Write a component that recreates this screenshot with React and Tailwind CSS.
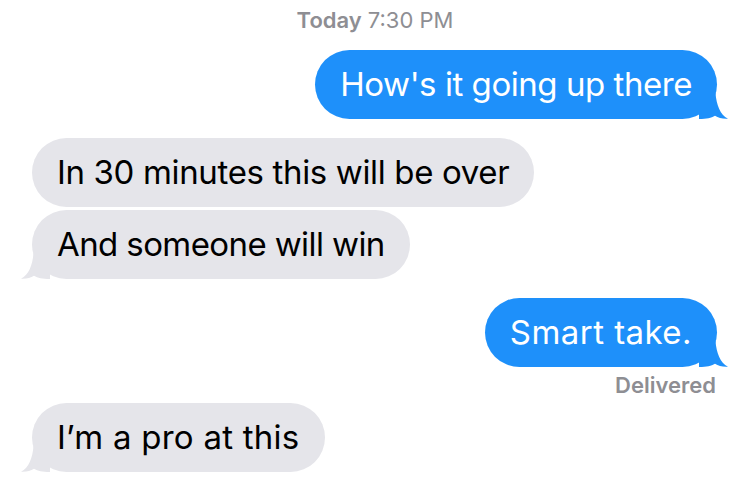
import React from "react";

const FONT = { fontFamily: 'Inter, "Noto Sans", Roboto, sans-serif' };

function Tail({ side }) {
  const isRight = side === "right";
  return (
    <svg
      width="30"
      height="26"
      viewBox="0 0 30 26"
      className={
        isRight
          ? "absolute -right-[12px] bottom-0"
          : "absolute -left-[12px] bottom-0 -scale-x-100"
      }
    >
      <path
        d="M0 0 L16.5 0 C17.5 12 21 21.5 29 25.8 C23.5 26.2 19.5 24.8 16 22.8 C12 25 8 26 0 26 Z"
        fill={isRight ? "#1e90fa" : "#e5e5ea"}
      />
    </svg>
  );
}

function Bubble({ side, text, tail, className = "", tracking = "tracking-[-0.45px]" }) {
  const isRight = side === "right";
  return (
    <div className={`flex ${isRight ? "justify-end pr-[33px]" : "justify-start pl-[32px]"} ${className}`}>
      <div
        className={`relative h-[69px] rounded-full flex items-center px-[25px] text-[33px] leading-none whitespace-nowrap ${tracking} ${
          isRight ? "bg-[#1e90fa] text-white" : "bg-[#e5e5ea] text-black"
        }`}
      >
        {tail && <Tail side={side} />}
        <span className="relative">{text}</span>
      </div>
    </div>
  );
}

export default function App() {
  return (
    <div className="w-[750px] h-[479px] bg-white overflow-hidden flex flex-col" style={FONT}>
      <div className="h-[38px] flex items-center justify-center text-[22px] text-[#8e8e93] pt-[2px]">
        <span className="font-semibold">Today</span>
        <span className="ml-[6px]">7:30 PM</span>
      </div>
      <Bubble side="right" text="How's it going up there" tail className="mt-[12px]" />
      <Bubble side="left" text="In 30 minutes this will be over" className="mt-[19px]" tracking="tracking-[-0.35px]" />
      <Bubble side="left" text="And someone will win" tail className="mt-[3px]" tracking="tracking-[-0.6px]" />
      <Bubble side="right" text="Smart take." tail className="mt-[19px]" tracking="tracking-[0.45px]" />
      <div className="flex justify-end pr-[34px] h-[36px] items-center text-[22px] font-semibold text-[#8e8e93]">
        Delivered
      </div>
      <Bubble side="left" text="I’m a pro at this" tail tracking="tracking-[0.25px]" />
    </div>
  );
}
